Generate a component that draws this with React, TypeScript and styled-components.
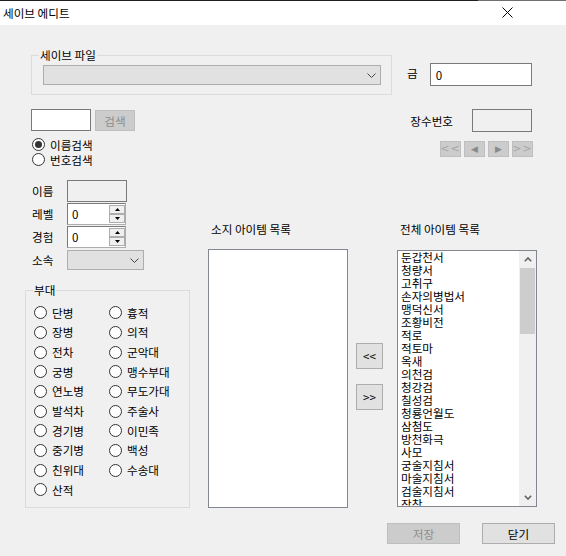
import React from 'react';
import styled, { createGlobalStyle } from 'styled-components';

const GlobalStyle = createGlobalStyle`
  *, *::before, *::after { box-sizing: border-box; }
  html, body { margin: 0; padding: 0; background: #f0f0f0; }
  body {
    font-family: 'Noto Sans CJK KR', 'Noto Sans', sans-serif;
    font-size: 11.6px;
    color: #000;
  }
`;

const Window = styled.div`
  width: 566px;
  height: 556px;
  overflow: hidden;
  background: #f0f0f0;
`;

const TitleBar = styled.div`
  height: 25px;
  display: flex;
  align-items: center;
  padding-left: 3px;
  background: linear-gradient(to right, #1f1f1f 478px, #707070 478px) top / 100% 1px no-repeat, #fff;
  line-height: 14px;
`;

const CloseIcon = styled.svg`
  margin-left: auto;
  margin-right: 53px;
`;

const TopRow = styled.div`
  display: flex;
  align-items: flex-start;
  margin-top: 30px;
  padding-left: 31px;
`;

const GroupBox = styled.div<{ $w: number; $h: number }>`
  position: relative;
  width: ${p => p.$w}px;
  height: ${p => p.$h}px;
  border: 1px solid #dcdcdc;
`;

const SaveGroup = styled(GroupBox)`
  padding: 9px 0 0 11px;
`;

const GroupLegend = styled.span`
  position: absolute;
  top: -8px;
  left: 7px;
  padding: 0 1px;
  background: #f0f0f0;
  line-height: 14px;
`;

const ComboBox = styled.div<{ $w: number }>`
  width: ${p => p.$w}px;
  height: 20px;
  background: #e1e1e1;
  border: 1px solid #adadad;
  display: flex;
  align-items: center;
  justify-content: flex-end;
  padding-right: 4px;
`;

const Label = styled.span`
  line-height: 14px;
  white-space: nowrap;
`;

const GoldLabel = styled(Label)`
  margin-left: 15px;
  margin-top: 11px;
`;

const TextBox = styled.div<{ $w: number; $h: number; $readOnly?: boolean }>`
  width: ${p => p.$w}px;
  height: ${p => p.$h}px;
  border: 1px solid #7a7a7a;
  background: ${p => (p.$readOnly ? '#f0f0f0' : '#fff')};
  padding-left: 5px;
  display: flex;
  align-items: center;
  line-height: 14px;
`;

const GoldBox = styled(TextBox)`
  margin-left: 12px;
  margin-top: 8px;
`;

const SearchRow = styled.div`
  display: flex;
  align-items: flex-start;
  margin-top: 14px;
  padding: 0 33px 0 31px;
`;

const SearchBlock = styled.div`
  display: flex;
  flex-direction: column;
`;

const SearchLine = styled.div`
  display: flex;
  align-items: flex-start;
`;

const Button = styled.div<{ $w: number; $h: number; $disabled?: boolean }>`
  width: ${p => p.$w}px;
  height: ${p => p.$h}px;
  display: flex;
  align-items: center;
  justify-content: center;
  line-height: 14px;
  background: ${p => (p.$disabled ? '#cccccc' : '#e1e1e1')};
  border: 1px solid ${p => (p.$disabled ? '#bfbfbf' : '#adadad')};
  color: ${p => (p.$disabled ? '#8d8d8d' : '#000')};
`;

const SearchButton = styled(Button)`
  margin-left: 4px;
  margin-top: 1px;
`;

const RadioList = styled.div`
  margin-top: 6px;
  margin-left: 1px;
`;

const RadioRow = styled.label`
  display: flex;
  align-items: center;
  height: 15px;
  gap: 5px;
  line-height: 14px;
  white-space: nowrap;
`;

const RadioCircle = styled.span<{ $checked?: boolean }>`
  width: 13px;
  height: 13px;
  flex: none;
  border-radius: 50%;
  border: 1px solid #333;
  background: #fff;
  display: flex;
  align-items: center;
  justify-content: center;
  &::after {
    content: '';
    width: 7px;
    height: 7px;
    border-radius: 50%;
    background: ${p => (p.$checked ? '#333' : 'transparent')};
  }
`;

const GeneralBlock = styled.div`
  margin-left: auto;
  display: flex;
  flex-direction: column;
  align-items: flex-end;
`;

const GeneralLine = styled.div`
  display: flex;
  align-items: center;
  gap: 19px;
  padding-right: 1px;
`;

const NavButtons = styled.div`
  display: flex;
  gap: 3px;
  margin-top: 9px;
`;

const NavButton = styled(Button)`
  font-size: 11px;
  letter-spacing: 1px;
  font-family: 'DejaVu Sans', sans-serif;
  color: #a6a6a6;
`;

const NavArrow = styled(NavButton)`
  font-size: 9px;
  letter-spacing: 0;
  color: #8a8a8a;
`;

const MainRow = styled.div`
  display: flex;
  align-items: flex-start;
  margin-top: 13px;
  padding-left: 25px;
`;

const LeftCol = styled.div`
  width: 165px;
  display: flex;
  flex-direction: column;
`;

const FieldRow = styled.div<{ $gap: number }>`
  display: flex;
  align-items: center;
  padding-left: 7px;
  margin-top: ${p => p.$gap}px;
`;

const FieldLabel = styled(Label)`
  width: 35px;
`;

const NumericBox = styled.div`
  width: 59px;
  height: 22px;
  border: 1px solid #7a7a7a;
  border-right-color: #adadad;
  border-bottom-color: #adadad;
  background: #fff;
  display: flex;
`;

const NumericValue = styled.div`
  flex: 1;
  padding-left: 4px;
  display: flex;
  align-items: center;
  line-height: 14px;
`;

const SpinColumn = styled.div`
  display: flex;
  flex-direction: column;
  padding: 1px 0 1px 0;
`;

const SpinButton = styled.div`
  width: 16px;
  height: 9px;
  border: 1px solid #adadad;
  background: #f0f0f0;
  display: flex;
  align-items: center;
  justify-content: center;
`;

const UnitGroup = styled(GroupBox)`
  margin-top: 20px;
  padding: 12px 0 0 8px;
  display: grid;
  grid-template-columns: 75px 1fr;
  grid-auto-rows: 19.67px;
  align-items: center;
`;

const ListCol = styled.div<{ $left: number }>`
  display: flex;
  flex-direction: column;
  margin-left: ${p => p.$left}px;
`;

const ColLabel = styled(Label)`
  margin-left: 3px;
  margin-top: 42px;
`;

const ListBox = styled.div<{ $top: number; $h: number }>`
  width: 140px;
  height: ${p => p.$h}px;
  margin-top: ${p => p.$top}px;
  border: 1px solid #828790;
  background: #fff;
  display: flex;
  overflow: hidden;
`;

const ListItems = styled.div`
  flex: 1;
  padding-left: 3px;
`;

const ListItem = styled.div`
  height: 13px;
  line-height: 13px;
  white-space: nowrap;
`;

const ScrollBar = styled.div`
  width: 17px;
  background: #f0f0f0;
  display: flex;
  flex-direction: column;
`;

const ScrollArrow = styled.div`
  height: 17px;
  display: flex;
  align-items: center;
  justify-content: center;
`;

const ScrollTrack = styled.div`
  flex: 1;
`;

const ScrollThumb = styled.div`
  height: 66px;
  margin: 0 1px;
  background: #cdcdcd;
`;

const ArrowCol = styled.div`
  display: flex;
  flex-direction: column;
  gap: 15px;
  margin-left: 8px;
  padding-top: 163px;
`;

const Footer = styled.div`
  display: flex;
  justify-content: flex-end;
  gap: 22px;
  margin-top: 15px;
  padding-right: 11px;
`;

const Chevron = ({ up = false }: { up?: boolean }) => (
  <svg width="9" height="5" viewBox="0 0 9 5">
    <polyline
      points={up ? '0.5,4.5 4.5,0.5 8.5,4.5' : '0.5,0.5 4.5,4.5 8.5,0.5'}
      fill="none"
      stroke="#444"
      strokeWidth="1"
    />
  </svg>
);

const ScrollChevron = ({ up = false }: { up?: boolean }) => (
  <svg width="8" height="5" viewBox="0 0 8 5">
    <polyline
      points={up ? '0.8,4.2 4,1 7.2,4.2' : '0.8,0.8 4,4 7.2,0.8'}
      fill="none"
      stroke="#606060"
      strokeWidth="1.6"
    />
  </svg>
);

const SpinTriangle = ({ up = false }: { up?: boolean }) => (
  <svg width="5" height="3" viewBox="0 0 5 3">
    <polygon points={up ? '0,3 2.5,0 5,3' : '0,0 5,0 2.5,3'} fill="#000" />
  </svg>
);

const Radio = ({ label, checked }: { label: string; checked?: boolean }) => (
  <RadioRow>
    <RadioCircle $checked={checked} />
    {label}
  </RadioRow>
);

const Numeric = ({ value }: { value: string }) => (
  <NumericBox>
    <NumericValue>{value}</NumericValue>
    <SpinColumn>
      <SpinButton>
        <SpinTriangle up />
      </SpinButton>
      <SpinButton>
        <SpinTriangle />
      </SpinButton>
    </SpinColumn>
  </NumericBox>
);

const units = [
  '단병', '흉적', '장병', '의적', '전차', '군악대', '궁병', '맹수부대',
  '연노병', '무도가대', '발석차', '주술사', '경기병', '이민족', '중기병',
  '백성', '친위대', '수송대', '산적'
];

const allItems = [
  '둔갑천서', '청량서', '고취구', '손자의병법서', '맹덕신서', '조황비전',
  '적로', '적토마', '옥새', '의천검', '청강검', '칠성검', '청룡언월도',
  '삼첨도', '방천화극', '사모', '궁술지침서', '마술지침서', '검술지침서', '장창'
];

export default function App() {
  return (
    <Window>
      <GlobalStyle />
      <TitleBar>
        세이브 에디트
        <CloseIcon width="11" height="11" viewBox="0 0 11 11">
          <path d="M0.5 0.5 L10.5 10.5 M10.5 0.5 L0.5 10.5" stroke="#000" strokeWidth="1" />
        </CloseIcon>
      </TitleBar>

      <TopRow>
        <SaveGroup $w={361} $h={40}>
          <GroupLegend>세이브 파일</GroupLegend>
          <ComboBox $w={338}>
            <Chevron />
          </ComboBox>
        </SaveGroup>
        <GoldLabel>금</GoldLabel>
        <GoldBox $w={102} $h={23}>0</GoldBox>
      </TopRow>

      <SearchRow>
        <SearchBlock>
          <SearchLine>
            <TextBox $w={60} $h={22} />
            <SearchButton $w={40} $h={21} $disabled>
              검색
            </SearchButton>
          </SearchLine>
          <RadioList>
            <Radio label="이름검색" checked />
            <Radio label="번호검색" />
          </RadioList>
        </SearchBlock>
        <GeneralBlock>
          <GeneralLine>
            <Label>장수번호</Label>
            <TextBox $w={60} $h={23} $readOnly />
          </GeneralLine>
          <NavButtons>
            <NavButton $w={21} $h={16} $disabled>&lt;&lt;</NavButton>
            <NavArrow $w={21} $h={16} $disabled>◀</NavArrow>
            <NavArrow $w={21} $h={16} $disabled>▶</NavArrow>
            <NavButton $w={21} $h={16} $disabled>&gt;&gt;</NavButton>
          </NavButtons>
        </GeneralBlock>
      </SearchRow>

      <MainRow>
        <LeftCol>
          <FieldRow $gap={0}>
            <FieldLabel>이름</FieldLabel>
            <TextBox $w={60} $h={22} $readOnly />
          </FieldRow>
          <FieldRow $gap={1}>
            <FieldLabel>레벨</FieldLabel>
            <Numeric value="0" />
          </FieldRow>
          <FieldRow $gap={1}>
            <FieldLabel>경험</FieldLabel>
            <Numeric value="0" />
          </FieldRow>
          <FieldRow $gap={2}>
            <FieldLabel>소속</FieldLabel>
            <ComboBox $w={77}>
              <Chevron />
            </ComboBox>
          </FieldRow>
          <UnitGroup $w={165} $h={218}>
            <GroupLegend>부대</GroupLegend>
            {units.map(u => (
              <Radio key={u} label={u} />
            ))}
          </UnitGroup>
        </LeftCol>

        <ListCol $left={18}>
          <ColLabel>소지 아이템 목록</ColLabel>
          <ListBox $top={13} $h={259} />
        </ListCol>

        <ArrowCol>
          <Button $w={27} $h={26}>&lt;&lt;</Button>
          <Button $w={27} $h={26}>&gt;&gt;</Button>
        </ArrowCol>

        <ListCol $left={14}>
          <ColLabel>전체 아이템 목록</ColLabel>
          <ListBox $top={14} $h={257}>
            <ListItems>
              {allItems.map(item => (
                <ListItem key={item}>{item}</ListItem>
              ))}
            </ListItems>
            <ScrollBar>
              <ScrollArrow>
                <ScrollChevron up />
              </ScrollArrow>
              <ScrollTrack>
                <ScrollThumb />
              </ScrollTrack>
              <ScrollArrow>
                <ScrollChevron />
              </ScrollArrow>
            </ScrollBar>
          </ListBox>
        </ListCol>
      </MainRow>

      <Footer>
        <Button $w={73} $h={21} $disabled>저장</Button>
        <Button $w={73} $h={21}>닫기</Button>
      </Footer>
    </Window>
  );
}
